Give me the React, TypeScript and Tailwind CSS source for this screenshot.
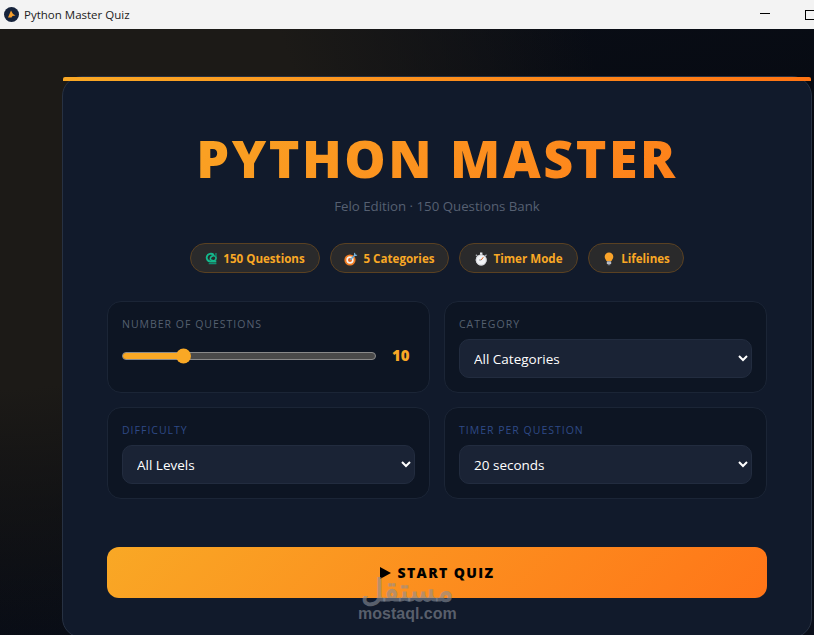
import React from 'react';

const Loop = () => (
  <svg width="13" height="13" viewBox="0 0 14 14" fill="none" className="shrink-0">
    <path d="M9.500 3.200C7 .8 2.800 2 2 5c-.7 2.600 1 5 3.600 5.200h6.600" stroke="#14b88c" strokeWidth="2" />
    <path d="M5.600 7.500c.3-2 2-3.600 3.900-3.400 1.700.2 2.600 1.400 2.400 2.800-.2 1.800-2.200 3-3.900 2.300-1.300-.5-2.600-.7-2.400-1.700z" stroke="#14b88c" strokeWidth="1.700" />
    <path d="M11.800 1v4M4 12.600h8.300" stroke="#0f8f72" strokeWidth="1.400" />
  </svg>
);

const Target = () => (
  <svg width="14" height="14" viewBox="0 0 14 14" className="shrink-0">
    <circle cx="6" cy="8" r="5.600" fill="#f07c22" />
    <circle cx="6" cy="8" r="3.700" fill="#f5f1ea" />
    <circle cx="6" cy="8" r="2" fill="#e8641b" />
    <path d="M6.300 7.700 11 3" stroke="#5fa8dc" strokeWidth="1.300" />
    <path d="M10 1.600 11 0.500l.4 2 2 .4-1.300 1.200-1.800-.3z" fill="#7cc0ee" />
  </svg>
);

const Stopwatch = () => (
  <svg width="14" height="14" viewBox="0 0 14 14" className="shrink-0">
    <rect x="6" y="0.500" width="2.400" height="2.200" fill="#e4e6ea" />
    <path d="m2.200 2.300 1.500 1.300-.8.900-1.400-1.300zm10 0-1.500 1.300.8.900 1.400-1.300z" fill="#a9adb4" />
    <circle cx="7.200" cy="8" r="5.500" fill="#f2f3f5" />
    <circle cx="7.200" cy="8" r="5" fill="none" stroke="#c9ccd2" strokeWidth="0.800" />
    <path d="M7.200 8 9.300 5.200" stroke="#e8641b" strokeWidth="1" />
    <path d="M7.200 8H5.200" stroke="#6b7280" strokeWidth="0.800" />
  </svg>
);

const Bulb = () => (
  <svg width="14" height="14" viewBox="0 0 14 14" className="shrink-0">
    <path d="M7 .5a4.300 4.300 0 0 0-4.300 4.300c0 1.800 1.200 2.800 1.800 4.200h5c.6-1.400 1.800-2.400 1.800-4.200A4.300 4.300 0 0 0 7 .5z" fill="#f9a32a" />
    <rect x="4.800" y="9.300" width="4.400" height="2.600" rx="0.500" fill="#b8bcc4" />
    <rect x="5.600" y="12" width="2.800" height="1.300" rx="0.500" fill="#7b808a" />
  </svg>
);

const pills = [
  { icon: <Loop />, label: '150 Questions', w: 'w-[130px]' },
  { icon: <Target />, label: '5 Categories', w: 'w-[119px]' },
  { icon: <Stopwatch />, label: 'Timer Mode', w: 'w-[119px]' },
  { icon: <Bulb />, label: 'Lifelines', w: 'w-[96px]' },
];

const Panel: React.FC<{ label: string; labelClass?: string; children: React.ReactNode }> = ({ label, labelClass, children }) => (
  <div className="h-[92px] rounded-[14px] border border-[#1b2536] bg-[#0d1523] px-[14px] pt-[14px]">
    <div className={`text-[10.5px] leading-[16px] tracking-[1px] uppercase ${labelClass ?? 'text-[#556070]'}`}>{label}</div>
    {children}
  </div>
);

const Select: React.FC<{ options: string[] }> = ({ options }) => (
  <select className="mt-[7px] block h-[39px] w-full rounded-[10px] border border-[#222c3f] bg-[#1a2335] px-[10px] text-[13.500px] text-white outline-none">
    {options.map((o) => (
      <option key={o}>{o}</option>
    ))}
  </select>
);

export default function App() {
  return (
    <div className="flex h-[635px] w-[814px] flex-col overflow-hidden bg-[#0a0f1a] font-['Open_Sans','Noto_Sans',sans-serif]">
      {/* title bar */}
      <div className="flex h-[29px] shrink-0 items-center bg-[#f3f3f3] pl-1">
        <svg width="15" height="15" viewBox="0 0 15 15" className="shrink-0">
          <circle cx="7.500" cy="7.500" r="7.500" fill="#16233c" />
          <path d="M4 10.500 7 3.500l2 3.500 2.500 1.500-3 .5-1 1.500z" fill="#f59e2c" />
        </svg>
        <span className="ml-[5px] text-[11.500px] text-[#222]">Python Master Quiz</span>
        <div className="ml-auto mb-[2px] mr-[35px] h-px w-[10px] bg-black" />
        <div className="mr-[-1px] h-[10px] w-[10px] border border-black" />
      </div>

      {/* page */}
      <div className="min-h-0 flex-1 overflow-hidden bg-[radial-gradient(ellipse_600px_520px_at_0px_100px,#1c1a17_0%,#1c1a17_50%,transparent_100%),linear-gradient(170deg,#0a0e17_0%,#05080f_50%,#0a0f1a_100%)] pl-[62px] pr-[2px] pt-[47px]">
        <div className="relative h-[562px] rounded-[20px] border border-[#273142] bg-[#111a2b] px-[44px] pt-[49px]">
          <div className="absolute left-0 right-0 top-0 h-[4px] rounded-t-[2px] bg-gradient-to-r from-[#f9a825] to-[#ff7413]" />
          <h1 className="bg-[linear-gradient(135deg,#f9a825,#ff7a18)] bg-clip-text text-center text-[52px] font-extrabold leading-[64px] tracking-[2.500px] text-transparent">
            PYTHON MASTER
          </h1>
          <p className="mt-[6px] text-center text-[13.250px] leading-[20px] text-[#566072]">Felo Edition · 150 Questions Bank</p>

          <div className="mt-[27px] flex justify-center gap-[10px]">
            {pills.map((p) => (
              <div
                key={p.label}
                className={`flex h-[30px] items-center justify-center gap-[5px] rounded-full border border-[#5a4122] bg-[#2a2a2b] pt-px text-[11.600px] font-bold text-[#f9a825] ${p.w}`}
              >
                {p.icon}
                <span>{p.label}</span>
              </div>
            ))}
          </div>

          <div className="mt-[28px] grid grid-cols-2 gap-[14px]">
            <Panel label="Number of Questions">
              <div className="mt-[16px] flex items-center">
                <div className="relative h-[8px] w-[254px] rounded-full border border-[#8a8a8a] bg-[#4a4a4a]">
                  <div className="h-full w-[61px] rounded-l-full bg-[#f9a825]" />
                  <div className="absolute left-[53px] top-1/2 h-[15px] w-[15px] -translate-y-1/2 rounded-full bg-[#f9a825]" />
                </div>
                <span className="ml-[16px] text-[15px] font-extrabold leading-none text-[#f9a825]">10</span>
              </div>
            </Panel>
            <Panel label="Category">
              <Select options={['All Categories']} />
            </Panel>
            <Panel label="Difficulty" labelClass="text-[#2f4a86]">
              <Select options={['All Levels']} />
            </Panel>
            <Panel label="Timer per Question" labelClass="text-[#2f4a86]">
              <Select options={['20 seconds']} />
            </Panel>
          </div>

          <button className="mt-[48px] flex h-[51px] w-full items-center justify-center gap-[6px] rounded-[12px] bg-[linear-gradient(135deg,#f9a825,#ff7518)] text-[14px] font-extrabold tracking-[1.400px] text-black">
            <svg width="12" height="12" viewBox="0 0 12 12">
              <path d="M1 0v12l11-6z" fill="#000" />
            </svg>
            START QUIZ
          </button>

          {/* watermark */}
          <div className="absolute left-[295px] top-[499px] flex flex-col items-center text-[#8a8f99]/60">
            <span className="text-[31px] font-bold leading-[26px]" dir="rtl">مستقل</span>
            <span className="mt-[4px] font-['Liberation_Sans',sans-serif] text-[16px] font-bold leading-[15px]">mostaql.com</span>
          </div>
        </div>
      </div>
    </div>
  );
}
